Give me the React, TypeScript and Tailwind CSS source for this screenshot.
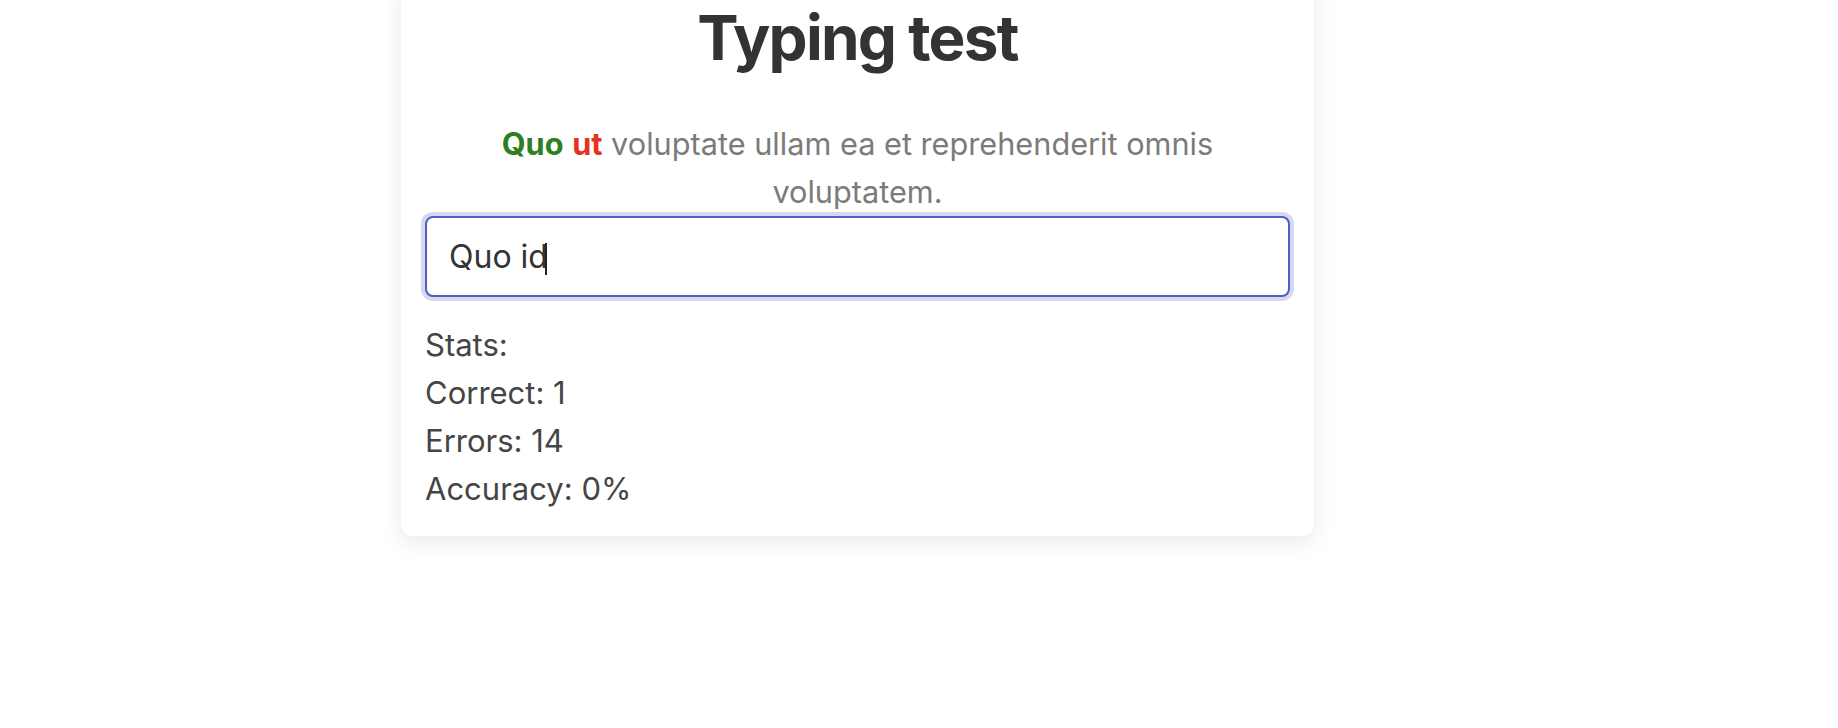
const App = () => {
  return (
    <div className="min-h-[728px] bg-white font-['Inter','Helvetica_Neue',sans-serif]">
      <div className="ml-[401px] -mt-5 w-[913px] rounded-xl bg-white px-6 pt-[22px] pb-[23px] shadow-[0_6px_24px_rgba(0,0,0,0.09)]">
        <h1 className="text-center text-[62px] leading-[72px] font-bold tracking-[-0.028em] text-[#333333]">
          Typing test
        </h1>
        <p className="mt-[46px] text-center text-[30.7px] leading-[48px] text-[#7b7b7b]">
          <span className="font-bold text-[#2f7f22]">Quo</span>{" "}
          <span className="font-bold text-[#e5331f]">ut</span> voluptate ullam ea et reprehenderit omnis voluptatem.
        </p>
        <div className="relative">
          <input
            autoFocus
            defaultValue="Quo id"
            className="block h-[81px] w-full rounded-lg border-2 border-[#4b5fc6] bg-white px-[22px] text-[32px] text-[#333333] caret-transparent shadow-[0_0_0_4px_#d4d9f0] outline-none"
          />
          <span className="pointer-events-none absolute top-[27px] left-[120px] h-[32px] w-[2px] bg-[#222222]" />
        </div>
        <div className="mt-[24px] text-[31px] leading-[48px] text-[#454545]">
          <div>Stats:</div>
          <div>Correct: 1</div>
          <div>Errors: 14</div>
          <div>Accuracy: 0%</div>
        </div>
      </div>
    </div>
  );
};

export default App;
